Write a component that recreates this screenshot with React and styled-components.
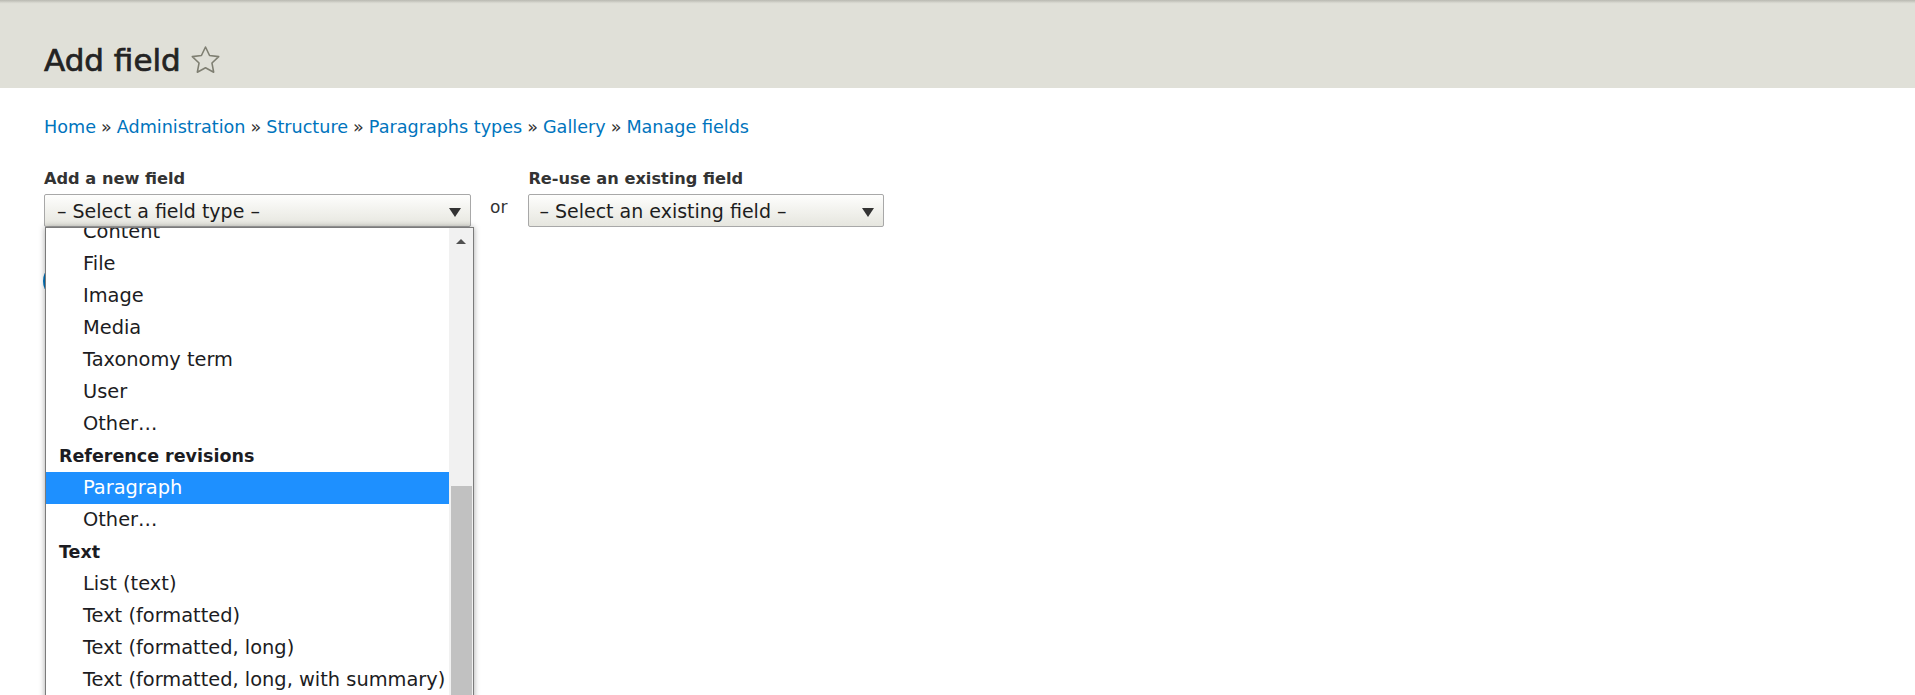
import React from "react";
import styled, { createGlobalStyle } from "styled-components";

const GlobalStyle = createGlobalStyle`
  html {
    overflow: hidden;
  }
  body {
    margin: 0;
    padding: 0;
    min-height: 100vh;
    background: #fff;
    font-family: "DejaVu Sans", "Liberation Sans", sans-serif;
    color: #333;
  }
`;

const Header = styled.header`
  background: linear-gradient(to bottom, #b9b9b1 0, #cfcfc7 2px, #dcdcd4 3px, #e0e0d8 4px);
  padding: 42px 44px 10px;
  height: 36px;
`;

const PageTitle = styled.h1`
  margin: 0;
  display: flex;
  align-items: center;
  gap: 8px;
  font-size: 31px;
  font-weight: normal;
  line-height: 36px;
  color: #232323;
  -webkit-text-stroke: 0.7px #232323;
`;

const Main = styled.main`
  padding: 0 44px;
`;

const Breadcrumb = styled.nav`
  margin-top: 27px;
  font-size: 17.6px;
  line-height: 24px;
  color: #333;
`;

const Crumb = styled.a`
  color: #0074bd;
  text-decoration: none;
`;

const Sep = styled.span`
  padding: 0 5px;
  color: #333;
`;

const FieldRow = styled.div`
  display: flex;
  align-items: flex-end;
  margin-top: 30px;
`;

const FieldGroup = styled.div`
  display: flex;
  flex-direction: column;
`;

const Label = styled.label`
  font-size: 16.2px;
  font-weight: bold;
  line-height: 20px;
  margin-bottom: 5px;
  color: #333;
`;

const SelectWrap = styled.div`
  position: relative;
`;

const SelectBox = styled.div`
  box-sizing: border-box;
  width: ${(p) => p.width}px;
  height: 33px;
  border: 1px solid #a8a8a8;
  border-radius: 2px;
  background: linear-gradient(to bottom, #fefefd 0%, #f3f3ef 45%, #e6e6df 100%);
  display: flex;
  align-items: center;
  justify-content: space-between;
  padding: 2px 9px 0 ${(p) => p.padLeft}px;
  font-size: 19px;
  line-height: 31px;
  color: #1d1d1d;
`;

const Caret = styled.span`
  width: 0;
  height: 0;
  border-left: 6.5px solid transparent;
  border-right: 6.5px solid transparent;
  border-top: 9px solid #333;
  margin-top: 2px;
`;

const Or = styled.span`
  font-size: 17px;
  line-height: 20px;
  margin: 0 21px 10px 19px;
  color: #333;
`;

const Actions = styled.div`
  margin-top: 35px;
`;

const PrimaryButton = styled.button`
  height: 38px;
  padding: 0 24px;
  border: 0;
  border-radius: 20px;
  background: #0074bd;
  color: #fff;
  font-family: inherit;
  font-size: 16px;
  margin-left: -1px;
`;

const Dropdown = styled.div`
  position: absolute;
  top: 100%;
  left: 1px;
  width: 429px;
  height: 480px;
  box-sizing: border-box;
  border: 1px solid #7b7b7b;
  background: #fff;
  box-shadow: 0 0 6px rgba(0, 0, 0, 0.35);
  display: flex;
  overflow: hidden;
  z-index: 10;
`;

const OptionList = styled.ul`
  list-style: none;
  margin: ${(p) => -p.scroll}px 0 0;
  padding: 0;
  flex: 1;
  min-width: 0;
`;

const Option = styled.li`
  height: 32px;
  line-height: 32px;
  font-size: ${(p) => (p.group ? "17.5px" : "19.4px")};
  font-weight: ${(p) => (p.group ? "bold" : "normal")};
  padding-left: ${(p) => (p.group ? 13 : 37)}px;
  white-space: nowrap;
  color: ${(p) => (p.selected ? "#fff" : "#1c1c22")};
  background: ${(p) => (p.selected ? "#1e90ff" : "transparent")};
`;

const ScrollTrack = styled.div`
  width: 24px;
  flex: none;
  background: #f1f1f1;
  position: relative;
  display: flex;
  flex-direction: column;
  align-items: center;
`;

const ScrollArrow = styled.span`
  margin-top: 11px;
  width: 0;
  height: 0;
  border-left: 5px solid transparent;
  border-right: 5px solid transparent;
  border-bottom: 5px solid #505050;
`;

const ScrollThumb = styled.div`
  position: absolute;
  left: 2px;
  right: 1px;
  top: 258px;
  bottom: 0;
  background: #c1c1c1;
`;

const crumbs = ["Home", "Administration", "Structure", "Paragraphs types", "Gallery", "Manage fields"];

const options = [
  { label: "Content" },
  { label: "File" },
  { label: "Image" },
  { label: "Media" },
  { label: "Taxonomy term" },
  { label: "User" },
  { label: "Other…" },
  { label: "Reference revisions", group: true },
  { label: "Paragraph", selected: true },
  { label: "Other…" },
  { label: "Text", group: true },
  { label: "List (text)" },
  { label: "Text (formatted)" },
  { label: "Text (formatted, long)" },
  { label: "Text (formatted, long, with summary)" },
  { label: "Text (plain)" },
];

function Star() {
  return (
    <svg width="33" height="33" viewBox="0 0 24 24" fill="none" stroke="#7f7f72" strokeWidth="1.15" strokeLinejoin="round">
      <polygon points="12 2.2 14.95 8.35 21.6 9.2 16.7 13.85 17.95 20.5 12 17.25 6.05 20.5 7.3 13.85 2.4 9.2 9.05 8.35" />
    </svg>
  );
}

export default function App() {
  return (
    <>
      <GlobalStyle />
      <Header>
        <PageTitle>
          Add field
          <Star />
        </PageTitle>
      </Header>
      <Main>
        <Breadcrumb>
          {crumbs.map((c, i) => (
            <React.Fragment key={c}>
              {i > 0 && <Sep>»</Sep>}
              <Crumb href="#">{c}</Crumb>
            </React.Fragment>
          ))}
        </Breadcrumb>

        <FieldRow>
          <FieldGroup>
            <Label>Add a new field</Label>
            <SelectWrap>
              <SelectBox width={427} padLeft={12}>
                <span>– Select a field type –</span>
                <Caret />
              </SelectBox>
              <Dropdown>
                <OptionList scroll={12}>
                  {options.map((o, i) => (
                    <Option key={i} group={o.group} selected={o.selected}>
                      {o.label}
                    </Option>
                  ))}
                </OptionList>
                <ScrollTrack>
                  <ScrollArrow />
                  <ScrollThumb />
                </ScrollTrack>
              </Dropdown>
            </SelectWrap>
          </FieldGroup>
          <Or>or</Or>
          <FieldGroup>
            <Label>Re-use an existing field</Label>
            <SelectBox width={356} padLeft={10}>
              <span>– Select an existing field –</span>
              <Caret />
            </SelectBox>
          </FieldGroup>
        </FieldRow>

        <Actions>
          <PrimaryButton>Save and continue</PrimaryButton>
        </Actions>
      </Main>
    </>
  );
}
